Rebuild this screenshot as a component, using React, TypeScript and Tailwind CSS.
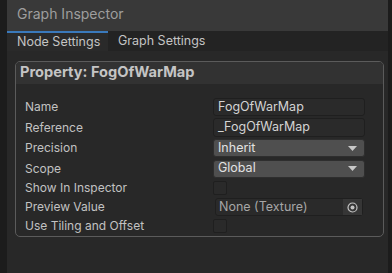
import React from 'react';

const TextField: React.FC<{ value: string; h?: string }> = ({ value, h = 'h-[18px]' }) => (
  <div className={`${h} w-[152px] flex items-center px-[4px] bg-[#2a2a2a] border border-[#1f1f1f] rounded-[3px] text-[12.5px] text-[#d4d4d4]`}>
    {value}
  </div>
);

const Dropdown: React.FC<{ value: string }> = ({ value }) => (
  <div className="h-[18px] w-[152px] flex items-center justify-between pl-[4px] pr-[7px] bg-[#4f4f4f] border border-[#2e2e2e] rounded-[3px] text-[12.5px] text-[#e2e2e2]">
    <span>{value}</span>
    <svg width="9" height="5" viewBox="0 0 9 5">
      <polygon points="0,0 9,0 4.5,5" fill="#c8c8c8" />
    </svg>
  </div>
);

const Checkbox: React.FC = () => (
  <div className="h-[14px] w-[14px] bg-[#2a2a2a] border border-[#1f1f1f] rounded-[2px]" />
);

const Row: React.FC<{ label: string; h: string; children: React.ReactNode }> = ({ label, h, children }) => (
  <div className={`${h} flex items-center`}>
    <div className="w-[188px] text-[12px] text-[#c2c2c2]">{label}</div>
    {children}
  </div>
);

const App: React.FC = () => {
  return (
    <div className="w-[392px] h-[273px] flex bg-[#1c1c1c] overflow-hidden font-['Inter',sans-serif]">
      <div className="w-[7px] shrink-0" />
      <div className="w-[381px] shrink-0 flex flex-col bg-[#282828]">
        <div className="h-[31px] flex items-center pl-[10px] pb-[5px] bg-[#393939] text-[14px] text-[#9e9e9e]">
          Graph Inspector
        </div>
        <div className="h-[20px] flex bg-[#232323] text-[12.5px] text-[#c4c4c4]">
          <div className="w-[101px] flex items-center pl-[10px] bg-[#2a2a2a] border-t-2 border-[#3a79bb]">
            Node Settings
          </div>
          <div className="flex items-center pl-[10px]">Graph Settings</div>
        </div>
        <div className="pl-[8px] pr-[4px] pt-[10px]">
          <div className="h-[176px] border border-[#5b5b5b] rounded-[5px] flex flex-col">
            <div className="h-[22px] flex items-center pl-[4px] bg-[#323232] rounded-t-[4px] text-[14.6px] font-bold text-[#c4c4c4]">
              Property: FogOfWarMap
            </div>
            <div className="flex flex-col pl-[9px] pt-[13px]">
              <Row label="Name" h="h-[20px]">
                <TextField value="FogOfWarMap" />
              </Row>
              <Row label="Reference" h="h-[21px]">
                <TextField value="_FogOfWarMap" h="h-[19px]" />
              </Row>
              <Row label="Precision" h="h-[20px]">
                <Dropdown value="Inherit" />
              </Row>
              <Row label="Scope" h="h-[21px]">
                <Dropdown value="Global" />
              </Row>
              <Row label="Show In Inspector" h="h-[17px]">
                <Checkbox />
              </Row>
              <Row label="Preview Value" h="h-[22px]">
                <div className="ml-[2px] h-[18px] w-[148px] flex items-center justify-between bg-[#2a2a2a] border border-[#1f1f1f] rounded-[3px] text-[12.5px] text-[#a6a6a6]">
                  <span className="pl-[3px]">None (Texture)</span>
                  <div className="h-full w-[19px] flex items-center justify-center bg-[#363636]">
                    <svg width="11" height="11" viewBox="0 0 11 11">
                      <circle cx="5.5" cy="5.5" r="4.5" fill="none" stroke="#c4c4c4" strokeWidth="1.2" />
                      <circle cx="5.5" cy="5.5" r="2" fill="#c4c4c4" />
                    </svg>
                  </div>
                </div>
              </Row>
              <Row label="Use Tiling and Offset" h="h-[16px]">
                <Checkbox />
              </Row>
            </div>
          </div>
        </div>
      </div>
      <div className="w-[4px] shrink-0" />
    </div>
  );
};

export default App;
